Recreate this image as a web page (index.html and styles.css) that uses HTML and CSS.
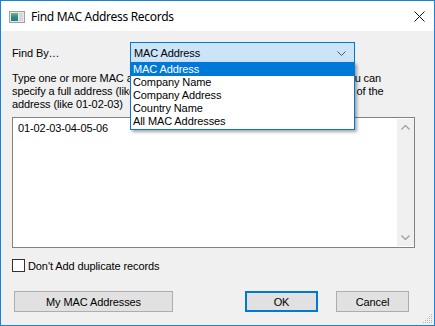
FILE: index.html
```html
<!DOCTYPE html>
<html lang="en">
<head>
    <meta charset="UTF-8">
    <title>Find MAC Address Records</title>
    <link rel="stylesheet" href="styles.css">
</head>
<body>
    <div class="window">
        <div class="titlebar">
            <svg class="app-icon" width="16" height="12" viewBox="0 0 16 12">
                <defs>
                    <linearGradient id="g1" x1="0" y1="0" x2="0" y2="1">
                        <stop offset="0" stop-color="#6fb3a0"/>
                        <stop offset="0.5" stop-color="#2f8f6a"/>
                        <stop offset="1" stop-color="#2a6fae"/>
                    </linearGradient>
                </defs>
                <rect x="0.5" y="0.5" width="15" height="11" fill="#e8e8e8" stroke="#a0a0a0"/>
                <rect x="2" y="2" width="7" height="8" fill="url(#g1)"/>
                <rect x="10" y="2" width="4" height="8" fill="#d6d6d6"/>
            </svg>
            <span class="title">Find MAC Address Records</span>
            <svg class="close" width="11" height="11" viewBox="0 0 11 11">
                <path d="M0.5 0.5 L10.5 10.5 M10.5 0.5 L0.5 10.5" stroke="#111" stroke-width="1"/>
            </svg>
        </div>

        <div class="content">
            <div class="find-row">
                <span class="label">Find By…</span>
                <div class="combo">
                    <span>MAC Address</span>
                    <svg class="chevron" width="9" height="5" viewBox="0 0 9 5">
                        <path d="M0.5 0.5 L4.5 4.5 L8.5 0.5" fill="none" stroke="#555" stroke-width="1"/>
                    </svg>
                    <ul class="dropdown">
                        <li class="selected">MAC Address</li>
                        <li>Company Name</li>
                        <li>Company Address</li>
                        <li>Country Name</li>
                        <li>All MAC Addresses</li>
                    </ul>
                </div>
            </div>

            <p class="hint">
                Type one or more MAC addresses, separated by a comma or space. You can<br>
                specify a full address (like 01-02-03-04-05-06) or simply the first 3 bytes of the<br>
                address (like 01-02-03)
            </p>

            <div class="textbox">
                <div class="textbox-text">01-02-03-04-05-06</div>
                <div class="scrollbar">
                    <div class="scroll-btn">
                        <svg width="9" height="5" viewBox="0 0 9 5"><path d="M0.5 4.5 L4.5 0.5 L8.5 4.5" fill="none" stroke="#a3a3a3" stroke-width="1.4"/></svg>
                    </div>
                    <div class="scroll-btn">
                        <svg width="9" height="5" viewBox="0 0 9 5"><path d="M0.5 0.5 L4.5 4.5 L8.5 0.5" fill="none" stroke="#a3a3a3" stroke-width="1.4"/></svg>
                    </div>
                </div>
            </div>

            <label class="check-row">
                <span class="checkbox"></span>
                <span>Don't Add duplicate records</span>
            </label>

            <div class="button-row">
                <button class="btn btn-wide">My MAC Addresses</button>
                <button class="btn btn-default">OK</button>
                <button class="btn">Cancel</button>
            </div>

            <svg class="grip" width="10" height="10" viewBox="0 0 10 10">
                <g fill="#b8b8b8">
                    <rect x="8" y="0" width="1" height="1"/>
                    <rect x="6" y="2" width="1" height="1"/><rect x="8" y="2" width="1" height="1"/>
                    <rect x="4" y="4" width="1" height="1"/><rect x="6" y="4" width="1" height="1"/><rect x="8" y="4" width="1" height="1"/>
                    <rect x="2" y="6" width="1" height="1"/><rect x="4" y="6" width="1" height="1"/><rect x="6" y="6" width="1" height="1"/><rect x="8" y="6" width="1" height="1"/>
                    <rect x="0" y="8" width="1" height="1"/><rect x="2" y="8" width="1" height="1"/><rect x="4" y="8" width="1" height="1"/><rect x="6" y="8" width="1" height="1"/><rect x="8" y="8" width="1" height="1"/>
                </g>
            </svg>
        </div>
    </div>
</body>
</html>
```

FILE: styles.css
```css
html, body {
    margin: 0;
    padding: 0;
    background: #f0f0f0;
}
body {
    font-family: "Liberation Sans", Arial, sans-serif;
    font-size: 11px;
    letter-spacing: -0.1px;
    color: #000;
}
.window {
    width: 435px;
    height: 326px;
    box-sizing: border-box;
    border: 1px solid #1883d7;
    display: flex;
    flex-direction: column;
    background: #f0f0f0;
}
.titlebar {
    height: 30px;
    flex: none;
    background: #fff;
    display: flex;
    align-items: center;
    padding: 0 9px 0 8px;
}
.app-icon {
    flex: none;
    margin-top: 1px;
}
.title {
    font-family: "Noto Sans", sans-serif;
    font-size: 12px;
    letter-spacing: -0.3px;
    margin-left: 6px;
    flex: 1;
}
.close {
    flex: none;
}
.content {
    flex: 1;
    position: relative;
    padding: 11px 0 0 11px;
}
.find-row {
    display: flex;
    align-items: center;
    height: 21px;
}
.label {
    width: 118px;
}
.combo {
    position: relative;
    width: 225px;
    height: 21px;
    box-sizing: border-box;
    border: 1px solid #0078d7;
    background: #cce4f7;
    display: flex;
    align-items: center;
    padding-left: 3px;
}
.chevron {
    position: absolute;
    right: 8px;
    top: 8px;
}
.dropdown {
    position: absolute;
    left: -1px;
    top: 19px;
    width: 225px;
    box-sizing: border-box;
    margin: 0;
    padding: 0 0 1px 0;
    list-style: none;
    background: #fff;
    border: 1px solid #0078d7;
    box-shadow: 2px 2px 3px rgba(0, 0, 0, 0.35);
    z-index: 2;
}
.dropdown li {
    height: 13px;
    line-height: 13px;
    padding-left: 2px;
}
.dropdown li.selected {
    background: #0078d7;
    color: #fff;
}
.hint {
    margin: 9px 0 0 0;
    line-height: 13px;
    white-space: nowrap;
}
.textbox {
    margin-top: 6px;
    width: 403px;
    height: 131px;
    box-sizing: border-box;
    border: 1px solid #828282;
    background: #fff;
    display: flex;
    padding: 1px 0 1px 0;
}
.textbox-text {
    flex: 1;
    padding: 3px 5px;
}
.scrollbar {
    width: 17px;
    background: #f0f0f0;
    display: flex;
    flex-direction: column;
    justify-content: space-between;
}
.scroll-btn {
    height: 17px;
    display: flex;
    align-items: center;
    justify-content: center;
}
.check-row {
    display: flex;
    align-items: center;
    margin-top: 11px;
    height: 13px;
}
.checkbox {
    width: 13px;
    height: 13px;
    box-sizing: border-box;
    border: 1px solid #333;
    background: #fff;
    margin-right: 3px;
}
.button-row {
    display: flex;
    margin-top: 19px;
    padding: 0 25px 0 2px;
}
.btn {
    font-family: "Liberation Sans", Arial, sans-serif;
    font-size: 11px;
    letter-spacing: -0.1px;
    height: 21px;
    width: 73px;
    box-sizing: border-box;
    background: #e1e1e1;
    border: 1px solid #adadad;
    border-radius: 0;
    padding: 0;
    color: #000;
}
.btn-wide {
    width: 159px;
}
.btn-default {
    margin-left: auto;
    margin-right: 18px;
    border: 2px solid #0078d7;
}
.grip {
    position: absolute;
    right: 1px;
    bottom: 1px;
}
```
